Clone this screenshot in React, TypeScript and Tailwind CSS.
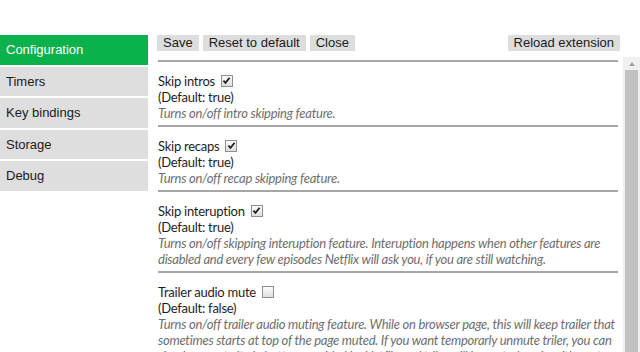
const menu = ['Configuration', 'Timers', 'Key bindings', 'Storage', 'Debug']

type Option = {
  label: string
  checked: boolean
  fallback: string
  lines: string[]
}

const options: Option[] = [
  {
    label: 'Skip intros',
    checked: true,
    fallback: 'true',
    lines: ['Turns on/off intro skipping feature.'],
  },
  {
    label: 'Skip recaps',
    checked: true,
    fallback: 'true',
    lines: ['Turns on/off recap skipping feature.'],
  },
  {
    label: 'Skip interuption',
    checked: true,
    fallback: 'true',
    lines: [
      'Turns on/off skipping interuption feature. Interuption happens when other features are',
      'disabled and every few episodes Netflix will ask you, if you are still watching.',
    ],
  },
  {
    label: 'Trailer audio mute',
    checked: false,
    fallback: 'false',
    lines: [
      'Turns on/off trailer audio muting feature. While on browser page, this will keep trailer that',
      'sometimes starts at top of the page muted. If you want temporarly unmute triler, you can',
      'simply unmute it via button provided by Netflix and triler will be muted again with next',
    ],
  },
]

function Checkbox({ checked }: { checked: boolean }) {
  return (
    <span className="ml-[6px] inline-flex h-[12px] w-[12px] items-center justify-center border border-[#8f8f8f] bg-gradient-to-b from-[#fbfbfb] to-[#dedede]">
      {checked && (
        <svg width="9" height="9" viewBox="0 0 9 9">
          <path d="M1.4 4.6 L3.5 6.8 L7.6 1.8" fill="none" stroke="#222" strokeWidth="1.8" />
        </svg>
      )}
    </span>
  )
}

export default function App() {
  return (
    <div className="flex h-[352px] w-[640px] overflow-hidden bg-white pt-[35px] font-['Liberation_Sans',Arial,sans-serif] text-[#1b1b1b]">
      {/* Sidebar */}
      <div className="flex w-[148px] shrink-0 flex-col gap-[2px]">
        {menu.map((item, i) => (
          <div
            key={item}
            className={
              i === 0
                ? 'flex h-[29.6px] items-center bg-[#0bb24c] pl-[6px] text-[13px] text-white'
                : 'flex h-[29.6px] items-center bg-[#dedede] pl-[6px] text-[13px]'
            }
          >
            {item}
          </div>
        ))}
      </div>

      {/* Main */}
      <div className="ml-[9px] flex min-w-0 flex-1 flex-col">
        <div className="mr-[20px] flex h-[17px] items-start justify-between text-[13px] leading-[16px]">
          <div className="flex gap-[4px]">
            <button className="h-[16px] bg-[#dddddd] px-[6px]">Save</button>
            <button className="h-[16px] bg-[#dddddd] px-[6px]">Reset to default</button>
            <button className="h-[16px] bg-[#dddddd] px-[6px]">Close</button>
          </div>
          <button className="h-[16px] bg-[#dddddd] px-[6px]">Reload extension</button>
        </div>

        <div className="mt-[5px] flex min-h-0 flex-1">
          <div className="min-w-0 flex-1 overflow-hidden pl-[1px] pr-[5px] pt-[3px] font-['Lato',sans-serif] text-[13px] leading-[16px] tracking-[-0.25px] text-[#1e1e1e]">
            {options.map((opt) => (
              <div key={opt.label}>
                <div className="h-[2px] bg-[#a6a6a6]" />
                <div className="pb-[4px] pt-[10px]">
                  <div className="flex h-[17px] items-center">
                    <span>{opt.label}</span>
                    <Checkbox checked={opt.checked} />
                  </div>
                  <div>(Default: {opt.fallback})</div>
                  {opt.lines.map((line) => (
                    <div key={line} className="whitespace-nowrap italic text-[#6e6e6e]">
                      {line}
                    </div>
                  ))}
                </div>
              </div>
            ))}
          </div>

          {/* Scrollbar */}
          <div className="flex w-[17px] shrink-0 flex-col items-center bg-[#f0f0f0]">
            <div className="flex h-[13px] w-full items-center justify-center">
              <span className="h-0 w-0 border-x-[3.5px] border-b-[4px] border-x-transparent border-b-[#a3a3a3]" />
            </div>
            <div className="w-[13px] flex-1 bg-[#c1c1c1]" />
          </div>
        </div>
      </div>
    </div>
  )
}
